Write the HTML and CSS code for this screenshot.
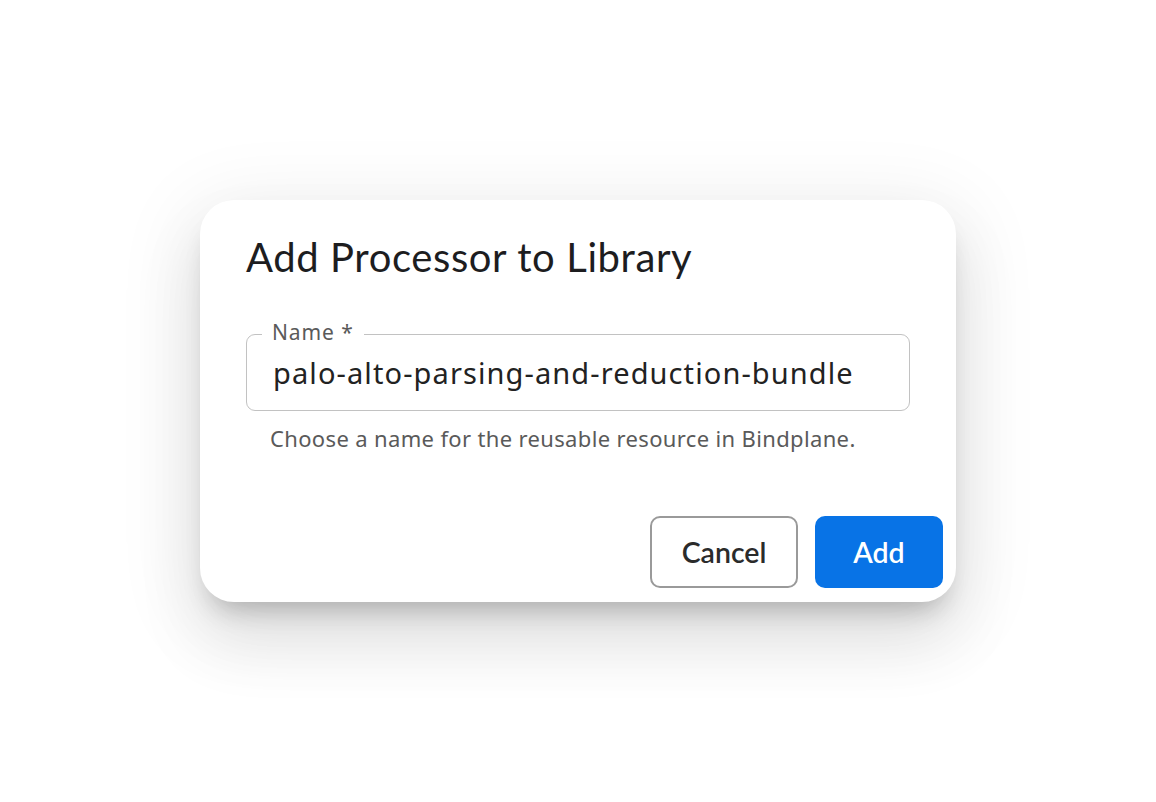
FILE: index.html
```html
<!DOCTYPE html>
<html lang="en">
<head>
  <meta charset="UTF-8" />
  <title>Add Processor to Library</title>
  <meta name="viewport" content="width=device-width, initial-scale=1.0" />
  <link rel="stylesheet" href="styles.css">
</head>
<body>
  <div class="backdrop">
    <div class="dialog" role="dialog" aria-labelledby="dialogTitle">
      <h2 id="dialogTitle" class="dialog-title">Add Processor to Library</h2>

      <div class="dialog-content">
        <div class="field">
          <div class="field-outline">
            <label for="nameInput" class="field-label">Name *</label>
            <input type="text" id="nameInput" value="palo-alto-parsing-and-reduction-bundle" />
          </div>
          <p class="helper">Choose a name for the reusable resource in Bindplane.</p>
        </div>
      </div>

      <div class="dialog-actions">
        <button class="btn btn-outline">Cancel</button>
        <button class="btn btn-primary">Add</button>
      </div>
    </div>
  </div>
</body>
</html>
```

FILE: styles.css
```css
body {
  margin: 0;
  background: #fff;
  font-family: Lato, 'Noto Sans', sans-serif;
  color: #1f1f1f;
}

.backdrop {
  height: 100vh;
  display: flex;
  align-items: center;
  justify-content: center;
}

.dialog {
  width: 756px;
  height: 402px;
  box-sizing: border-box;
  background: #fff;
  border-radius: 34px;
  display: flex;
  flex-direction: column;
  box-shadow: 0 18px 26px -12px rgba(0,0,0,0.24),
              0 40px 64px 5px rgba(0,0,0,0.08),
              0 15px 78px 14px rgba(0,0,0,0.07);
}

.dialog-title {
  margin: 0;
  padding: 31px 46px 0;
  font-size: 40px;
  font-weight: 400;
  letter-spacing: 0.6px;
  line-height: 52px;
  color: #1d1d1f;
}

.dialog-content {
  padding: 0 46px;
  flex: 1;
}

.field {
  margin-top: 51px;
}

.field-outline {
  position: relative;
  height: 77px;
  box-sizing: border-box;
  padding: 0 26px;
  border: 1.5px solid #c2c2c2;
  border-radius: 9px;
  display: flex;
  align-items: center;
}

.field-label {
  position: absolute;
  top: -14px;
  left: 15px;
  padding: 0 10px;
  background: #fff;
  font-family: 'Noto Sans', sans-serif;
  font-size: 21px;
  line-height: 22px;
  letter-spacing: 0.9px;
  color: #5a5a5a;
}

.field-outline input {
  width: 100%;
  height: 40px;
  border: 0;
  outline: 0;
  padding: 0;
  font-family: 'Noto Sans', sans-serif;
  font-size: 29px;
  line-height: 40px;
  letter-spacing: 1.1px;
  color: #222;
  background: transparent;
}

.helper {
  margin: 12px 0 0 24px;
  font-family: 'Noto Sans', sans-serif;
  font-size: 22px;
  line-height: 30px;
  letter-spacing: 0.35px;
  color: #5a5a5a;
}

.dialog-actions {
  display: flex;
  justify-content: flex-end;
  gap: 17px;
  padding: 0 13px 14px;
}

.btn {
  height: 72px;
  border-radius: 10px;
  font-family: Lato, sans-serif;
  font-size: 28.5px;
  font-weight: 600;
  cursor: pointer;
}

.btn-outline {
  width: 148px;
  background: #fff;
  border: 2px solid #9a9a9a;
  color: #2b2b2b;
}

.btn-primary {
  width: 128px;
  background: #0873e6;
  border: 0;
  color: #fff;
}
```
